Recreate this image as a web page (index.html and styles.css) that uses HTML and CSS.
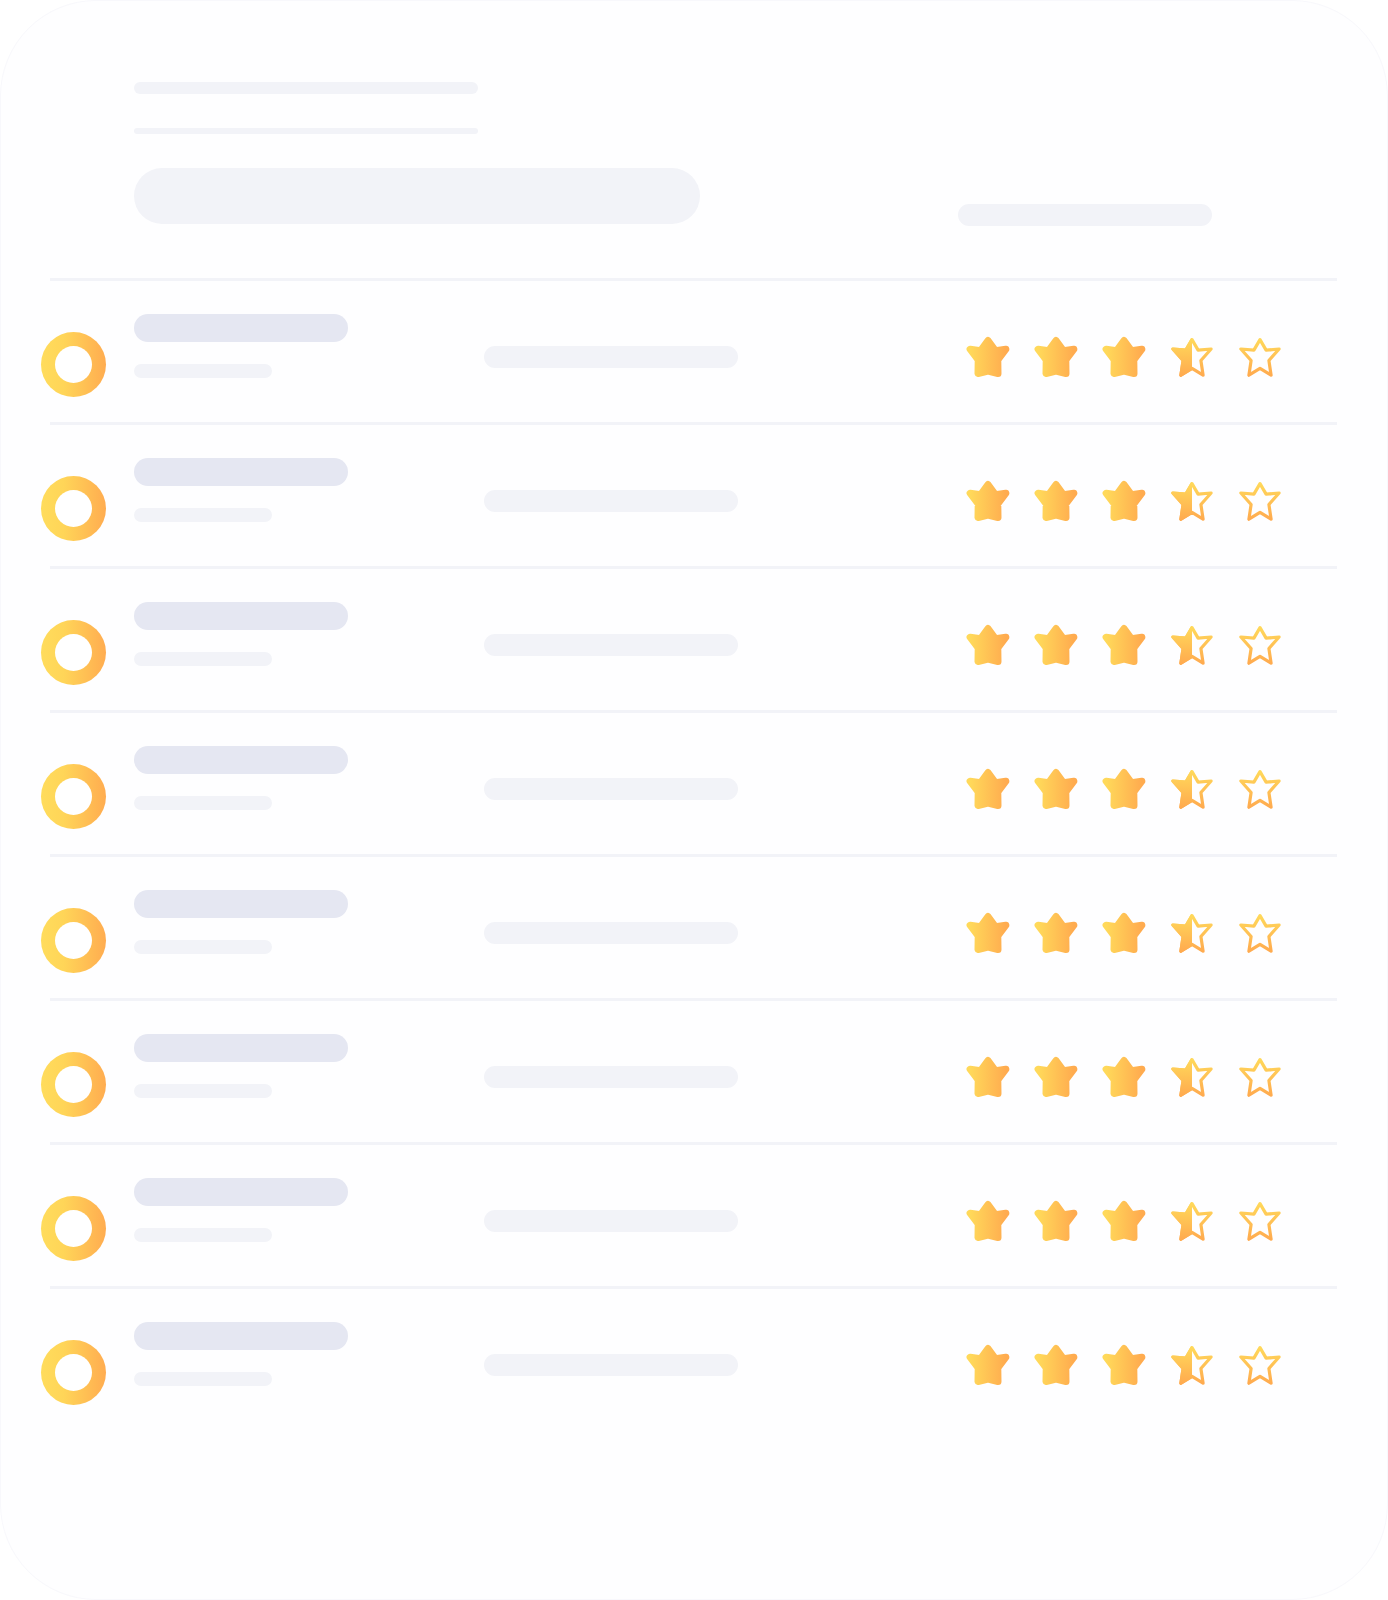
FILE: index.html
```html
<!DOCTYPE html>
<html lang="en">
<head>
<meta charset="utf-8">
<title>Ratings</title>
<link rel="stylesheet" href="styles.css">
</head>
<body>
<svg class="defs" width="0" height="0" aria-hidden="true">
  <defs>
    <linearGradient id="gh" x1="0" y1="0" x2="1" y2="0">
      <stop offset="0" stop-color="#ffd95a"/>
      <stop offset="1" stop-color="#ffab4f"/>
    </linearGradient>
    <linearGradient id="gv" x1="0" y1="0" x2="0" y2="1">
      <stop offset="0" stop-color="#ffd85a"/>
      <stop offset="1" stop-color="#ffab4f"/>
    </linearGradient>
    <clipPath id="lefthalf"><rect x="0" y="0" width="21" height="42"/></clipPath>
    <symbol id="star-full" viewBox="0 0 42 40" overflow="visible">
      <polygon points="21,3.5 28.5,13.8 38.9,12.2 30.8,23 31,36.5 21,34 11,36.5 11.2,23 3.1,12.2 13.5,13.8" fill="url(#gh)" stroke="url(#gh)" stroke-width="7" stroke-linejoin="round"/>
    </symbol>
    <symbol id="star-half" viewBox="0 0 42 40" overflow="visible">
      <polygon clip-path="url(#lefthalf)" points="21,2.6 27.1,13.1 40.1,12 29.9,23.5 32.1,38.2 21,31.3 9.9,38.2 12.1,23.5 1.9,12 14.9,13.1" fill="url(#gv)" stroke="url(#gv)" stroke-width="3.2" stroke-linejoin="round"/>
      <polygon points="21,2.6 27.1,13.1 40.1,12 29.9,23.5 32.1,38.2 21,31.3 9.9,38.2 12.1,23.5 1.9,12 14.9,13.1" fill="none" stroke="url(#gv)" stroke-width="3.2" stroke-linejoin="round"/>
    </symbol>
    <symbol id="star-empty" viewBox="0 0 42 40" overflow="visible">
      <polygon points="21,2.6 27.1,13.1 40.1,12 29.9,23.5 32.1,38.2 21,31.3 9.9,38.2 12.1,23.5 1.9,12 14.9,13.1" fill="none" stroke="url(#gv)" stroke-width="3.2" stroke-linejoin="round"/>
    </symbol>
  </defs>
</svg>
<main class="card">
  <header class="header">
    <div class="header-left">
      <div class="sk sk-title"></div>
      <div class="sk sk-sub"></div>
      <div class="sk sk-pill"></div>
    </div>
    <div class="sk sk-right"></div>
  </header>

  <section class="list">
    <div class="divider"></div>
    <div class="row">
      <div class="ring"></div>
      <div class="text"><div class="sk sk-name"></div><div class="sk sk-meta"></div></div>
      <div class="sk sk-mid"></div>
      <div class="stars">
        <svg class="star"><use href="#star-full"/></svg><svg class="star"><use href="#star-full"/></svg><svg class="star"><use href="#star-full"/></svg><svg class="star"><use href="#star-half"/></svg><svg class="star"><use href="#star-empty"/></svg>
      </div>
    </div>
    <div class="divider"></div>
    <div class="row">
      <div class="ring"></div>
      <div class="text"><div class="sk sk-name"></div><div class="sk sk-meta"></div></div>
      <div class="sk sk-mid"></div>
      <div class="stars">
        <svg class="star"><use href="#star-full"/></svg><svg class="star"><use href="#star-full"/></svg><svg class="star"><use href="#star-full"/></svg><svg class="star"><use href="#star-half"/></svg><svg class="star"><use href="#star-empty"/></svg>
      </div>
    </div>
    <div class="divider"></div>
    <div class="row">
      <div class="ring"></div>
      <div class="text"><div class="sk sk-name"></div><div class="sk sk-meta"></div></div>
      <div class="sk sk-mid"></div>
      <div class="stars">
        <svg class="star"><use href="#star-full"/></svg><svg class="star"><use href="#star-full"/></svg><svg class="star"><use href="#star-full"/></svg><svg class="star"><use href="#star-half"/></svg><svg class="star"><use href="#star-empty"/></svg>
      </div>
    </div>
    <div class="divider"></div>
    <div class="row">
      <div class="ring"></div>
      <div class="text"><div class="sk sk-name"></div><div class="sk sk-meta"></div></div>
      <div class="sk sk-mid"></div>
      <div class="stars">
        <svg class="star"><use href="#star-full"/></svg><svg class="star"><use href="#star-full"/></svg><svg class="star"><use href="#star-full"/></svg><svg class="star"><use href="#star-half"/></svg><svg class="star"><use href="#star-empty"/></svg>
      </div>
    </div>
    <div class="divider"></div>
    <div class="row">
      <div class="ring"></div>
      <div class="text"><div class="sk sk-name"></div><div class="sk sk-meta"></div></div>
      <div class="sk sk-mid"></div>
      <div class="stars">
        <svg class="star"><use href="#star-full"/></svg><svg class="star"><use href="#star-full"/></svg><svg class="star"><use href="#star-full"/></svg><svg class="star"><use href="#star-half"/></svg><svg class="star"><use href="#star-empty"/></svg>
      </div>
    </div>
    <div class="divider"></div>
    <div class="row">
      <div class="ring"></div>
      <div class="text"><div class="sk sk-name"></div><div class="sk sk-meta"></div></div>
      <div class="sk sk-mid"></div>
      <div class="stars">
        <svg class="star"><use href="#star-full"/></svg><svg class="star"><use href="#star-full"/></svg><svg class="star"><use href="#star-full"/></svg><svg class="star"><use href="#star-half"/></svg><svg class="star"><use href="#star-empty"/></svg>
      </div>
    </div>
    <div class="divider"></div>
    <div class="row">
      <div class="ring"></div>
      <div class="text"><div class="sk sk-name"></div><div class="sk sk-meta"></div></div>
      <div class="sk sk-mid"></div>
      <div class="stars">
        <svg class="star"><use href="#star-full"/></svg><svg class="star"><use href="#star-full"/></svg><svg class="star"><use href="#star-full"/></svg><svg class="star"><use href="#star-half"/></svg><svg class="star"><use href="#star-empty"/></svg>
      </div>
    </div>
    <div class="divider"></div>
    <div class="row">
      <div class="ring"></div>
      <div class="text"><div class="sk sk-name"></div><div class="sk sk-meta"></div></div>
      <div class="sk sk-mid"></div>
      <div class="stars">
        <svg class="star"><use href="#star-full"/></svg><svg class="star"><use href="#star-full"/></svg><svg class="star"><use href="#star-full"/></svg><svg class="star"><use href="#star-half"/></svg><svg class="star"><use href="#star-empty"/></svg>
      </div>
    </div>
  </section>
</main>
</body>
</html>
```

FILE: styles.css
```css
html, body {
  margin: 0;
  padding: 0;
  background: #ffffff;
}

.defs {
  position: absolute;
  width: 0;
  height: 0;
  overflow: hidden;
}

.card {
  box-sizing: border-box;
  width: 1388px;
  height: 1600px;
  border: 1px solid #f8f8fc;
  border-radius: 96px;
  background: #fefeff;
  padding-top: 81px;
  overflow: hidden;
}

.sk {
  background: #f2f3f8;
  border-radius: 999px;
  flex: none;
}

.header {
  display: flex;
  align-items: flex-start;
}

.header-left {
  display: flex;
  flex-direction: column;
  padding-left: 133px;
}

.sk-title {
  width: 344px;
  height: 12px;
}

.sk-sub {
  width: 344px;
  height: 6px;
  margin-top: 34px;
  border-radius: 3px;
}

.sk-pill {
  width: 566px;
  height: 56px;
  margin-top: 34px;
}

.sk-right {
  width: 254px;
  height: 22px;
  margin-top: 122px;
  margin-left: 258px;
}

.list {
  margin-top: 52px;
}

.divider {
  height: 3px;
  margin: 0 50px 0 49px;
  background: #f2f3f8;
}

.row {
  display: flex;
  align-items: flex-start;
  height: 141px;
  padding-left: 40px;
}

.ring {
  position: relative;
  flex: none;
  width: 65px;
  height: 65px;
  margin-top: 51px;
  border-radius: 50%;
  background: linear-gradient(90deg, #ffdc5c 0%, #ffd558 35%, #ffac50 100%);
}

.ring::after {
  content: "";
  position: absolute;
  left: 14px;
  top: 14px;
  width: 37px;
  height: 37px;
  border-radius: 50%;
  background: #ffffff;
}

.text {
  display: flex;
  flex-direction: column;
  margin-left: 28px;
  margin-top: 33px;
}

.sk-name {
  width: 214px;
  height: 28px;
  background: #e5e7f2;
}

.sk-meta {
  width: 138px;
  height: 14px;
  margin-top: 22px;
}

.sk-mid {
  width: 254px;
  height: 22px;
  margin-left: 136px;
  margin-top: 65px;
}

.stars {
  display: flex;
  gap: 26px;
  margin-left: 229px;
  margin-top: 56px;
}

.star {
  display: block;
  width: 42px;
  height: 40px;
  overflow: visible;
}
```
